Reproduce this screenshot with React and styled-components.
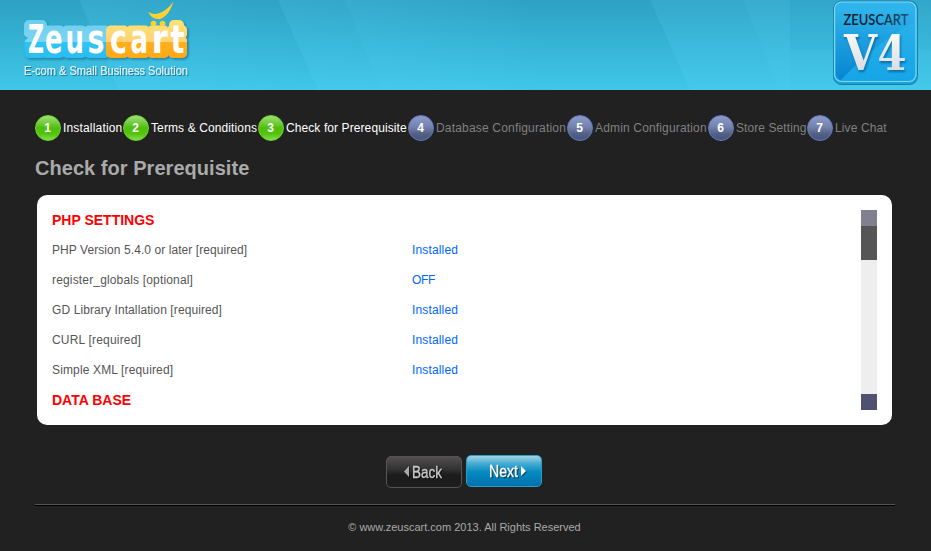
import React from 'react';
import styled, { createGlobalStyle } from 'styled-components';

const GlobalStyle = createGlobalStyle`
  * { box-sizing: border-box; }
  html, body { margin: 0; padding: 0; background: #212121; }
  body { font: 12px "Liberation Sans", Arial, sans-serif; color: #555; overflow: hidden; }
`;

const Page = styled.div`
  width: 931px;
  height: 551px;
  background: #212121;
`;

const Header = styled.header`
  display: grid;
  height: 90px;
  background: linear-gradient(#2da1c3, #3fc7e9);
  > * { grid-area: 1 / 1; }
`;

const Beams = styled.svg`
  display: block;
  width: 931px;
  height: 90px;
`;

const Brand = styled.div`
  display: flex;
  justify-content: space-between;
  padding: 0 10px 0 20px;
  z-index: 1;
  svg { display: block; }
`;

const Tagline = styled.text`
  font: 12.5px "Liberation Sans Narrow", "Liberation Sans", sans-serif;
  fill: #e3f2f7;
  stroke: #e3f2f7;
  stroke-width: .2px;
  filter: drop-shadow(1px 1px 0 #197b9a);
`;

const BadgeNumber = styled.text`
  font: bold 49px "DejaVu Serif", serif;
  fill: url(#silver);
  filter: drop-shadow(1px 2px 1px #086da9);
`;

const ButtonLabel = styled.text`
  font: 16px "Liberation Sans Narrow", "Liberation Sans", sans-serif;
  stroke-width: .35px;
  filter: drop-shadow(1px 1px 0 rgba(0, 0, 0, .6));
`;

const Content = styled.main`
  width: 860px;
  margin-left: 35px;
  padding-top: 25px;
`;

const Steps = styled.ol`
  display: flex;
  height: 26px;
  margin: 0;
  padding: 0;
  list-style: none;
`;

const Step = styled.li`
  display: flex;
  align-items: center;
  gap: 2px;
  width: ${p => p.$width}px;
  flex: none;
  white-space: nowrap;
  letter-spacing: ${p => p.$tracking}px;
  color: ${p => (p.$done ? '#fff' : '#808080')};
`;

const Bullet = styled.span`
  width: 26px;
  height: 26px;
  flex: none;
  border-radius: 50%;
  border: 1px solid ${p => (p.$done ? '#6fd52b' : '#607cc4')};
  background: ${p => (p.$done
    ? 'linear-gradient(#a0df78 0%, #72cb3c 30%, #4fbd0c 50%, #55c40e 75%, #86dc4e 100%)'
    : 'linear-gradient(#8e9bca 0%, #7482af 45%, #536085 75%, #48557b 100%)')};
  color: #fff;
  font: bold 12px/24px "Liberation Sans", Arial, sans-serif;
  letter-spacing: 0;
  text-align: center;
  padding-right: 1px;
`;

const Title = styled.h1`
  margin: 15px 0 0;
  font-size: 20px;
  line-height: 24px;
  letter-spacing: .04px;
  color: #aaa;
`;

const Panel = styled.section`
  display: flex;
  width: 855px;
  height: 230px;
  margin: 15px 0 0 2px;
  padding: 15px;
  border-radius: 10px;
  background: #fff;
`;

const Settings = styled.div`
  flex: 1;
  height: 200px;
  overflow: hidden;
`;

const GroupTitle = styled.h2`
  margin: 0;
  height: 25px;
  font-size: 14px;
  line-height: 20px;
  color: #f00;
`;

const SettingRow = styled.div`
  display: grid;
  grid-template-columns: 360px 1fr;
  height: 30px;
  line-height: 30px;
  letter-spacing: ${p => p.$tracking}px;
`;

const Value = styled.span`
  color: #0066ff;
  letter-spacing: ${p => (p.$off ? -0.3 : 0.15)}px;
`;

const Spacer = styled.div`
  height: 5px;
`;

const ScrollTrack = styled.div`
  display: flex;
  flex-direction: column;
  width: 16px;
  height: 200px;
  background: #eee;
`;

const ScrollCap = styled.div`
  height: 16px;
  background: ${p => p.$color};
`;

const ScrollThumb = styled.div`
  height: 34px;
  margin-bottom: auto;
  background: #555;
`;

const Actions = styled.div`
  display: flex;
  gap: 4px;
  margin: 30px 0 0 351px;
  height: 49px;
`;

const ActionButton = styled.button`
  width: 76px;
  height: 32px;
  margin: ${p => (p.$primary ? 0 : '1px')} 0 0;
  padding: 0;
  border: 1px solid ${p => (p.$primary ? '#2b9fc3' : '#555')};
  border-radius: 5px;
  background: ${p => (p.$primary
    ? 'linear-gradient(#a5d4e6 0%, #46acd2 25%, #078bc1 52%, #0070ae 100%)'
    : 'linear-gradient(#514f4f 0%, #333 40%, #1c1c1c 60%, #1d1d1d 100%)')};
  svg { display: block; }
`;

const Footer = styled.footer`
  border-top: 1px solid #555;
  box-shadow: inset 0 1px #000;
  height: 46px;
  padding: 16px 1px 0 0;
  text-align: center;
  font-size: 11px;
  line-height: 13px;
  color: #aaa;
`;

const steps = [
  ['Installation', 88, 0.17], ['Terms & Conditions', 135, 0.11], ['Check for Prerequisite', 150, 0.09],
  ['Database Configuration', 159, 0.18], ['Admin Configuration', 141, 0.16], ['Store Setting', 99, 0.08],
  ['Live Chat', 88, 0.11],
];

const settings = [
  ['PHP Version 5.4.0 or later [required]', 'Installed', 0.07],
  ['register_globals [optional]', 'OFF', 0.16],
  ['GD Library Intallation [required]', 'Installed', 0.1],
  ['CURL [required]', 'Installed', 0.19],
  ['Simple XML [required]', 'Installed', 0.14],
];

const wordmark = [
  { ch: 'Z', x: 8, w: 16, size: 38.5 },
  { ch: 'e', x: 25, w: 17.5, size: 41 },
  { ch: 'u', x: 45.5, w: 18.5, size: 41 },
  { ch: 's', x: 67.5, w: 17, size: 41 },
  { ch: 'c', x: 90, w: 17, size: 41 },
  { ch: 'a', x: 110.5, w: 17.5, size: 41 },
  { ch: 'r', x: 131.5, w: 16.5, size: 41 },
  { ch: 't', x: 150.5, w: 14, size: 38.5 },
];

const Logo = () => (
  <svg width="220" height="90" aria-label="Zeuscart">
    <defs>
      <linearGradient id="blue" gradientUnits="userSpaceOnUse" x1="0" y1="20" x2="0" y2="58">
        <stop offset="0" stopColor="#6ccfee" /><stop offset=".57" stopColor="#7bd4f2" />
        <stop offset=".58" stopColor="#2fc3f6" /><stop offset="1" stopColor="#29bdf2" />
      </linearGradient>
      <linearGradient id="gold" gradientUnits="userSpaceOnUse" x1="0" y1="20" x2="0" y2="58">
        <stop offset="0" stopColor="#ffe372" /><stop offset=".57" stopColor="#ffd276" />
        <stop offset=".58" stopColor="#ffb01d" /><stop offset="1" stopColor="#fda916" />
      </linearGradient>
      <filter id="soft" x="-10%" y="-10%" width="120%" height="130%">
        <feDropShadow dx="1.5" dy="1.5" stdDeviation="1" floodColor="#086080" floodOpacity=".65" />
      </filter>
    </defs>
    <g filter="url(#soft)">
      <g fill="url(#blue)">
        <rect x="4" y="20" width="23" height="18" rx="5" />
        <rect x="8" y="22" width="17" height="30" />
        <rect x="4.5" y="38" width="22" height="20" rx="5" />
        <rect x="21" y="25.5" width="24" height="32.5" rx="5" />
        <rect x="42" y="25.5" width="25" height="32.5" rx="5" />
        <rect x="64" y="25.5" width="26" height="32.5" rx="5" />
        <rect x="20" y="29" width="75" height="26" />
      </g>
      <g fill="url(#gold)">
        <rect x="86" y="25.5" width="23" height="32.5" rx="5" />
        <rect x="106" y="25.5" width="24" height="32.5" rx="5" />
        <rect x="127" y="25.5" width="22" height="32.5" rx="5" />
        <rect x="149" y="20" width="15" height="24" rx="5" />
        <rect x="147" y="25" width="20" height="14" rx="5" />
        <rect x="148" y="36" width="19" height="22" rx="5" />
        <rect x="90" y="29" width="70" height="26" />
      </g>
    </g>
    <g fontFamily="'DejaVu Sans', sans-serif" fontWeight="bold" fill="#fff">
      {wordmark.map(({ ch, x, w, size }) => (
        <text key={ch} x={x} y="52.5" fontSize={size} textLength={w} lengthAdjust="spacingAndGlyphs">{ch}</text>
      ))}
    </g>
    <g fill="#ffd12e">
      <path d="M128.5 12C136 17 146 12 153.5 1.5C151 10 146 17.5 140 19C134 19.5 130 16.5 128.5 12Z" />
      <circle cx="133.5" cy="23.5" r="2.8" /><circle cx="142.5" cy="23.5" r="2.8" />
    </g>
    <Tagline x="4" y="75" textLength="164" lengthAdjust="spacingAndGlyphs">E-com &amp; Small Business Solution</Tagline>
  </svg>
);

const Badge = () => (
  <svg width="91" height="90" aria-label="Zeuscart V4">
    <defs>
      <linearGradient id="tile" x1="0" y1="0" x2="0" y2="1">
        <stop stopColor="#2fb4eb" /><stop offset="1" stopColor="#15a5e7" />
      </linearGradient>
      <linearGradient id="shade" x1="0" y1="0" x2="0" y2="1">
        <stop stopColor="#2fb4eb" /><stop offset="1" stopColor="#0785d1" />
      </linearGradient>
      <linearGradient id="silver" x1="0" y1="0" x2="0" y2="1">
        <stop stopColor="#fff" /><stop offset=".6" stopColor="#e4e6e8" /><stop offset="1" stopColor="#d0d4d8" />
      </linearGradient>
      <linearGradient id="ink" x1="0" y1="0" x2="1" y2="0">
        <stop stopColor="#10202c" /><stop offset=".5" stopColor="#123" /><stop offset="1" stopColor="#1b5273" />
      </linearGradient>
    </defs>
    <rect x="3.5" y="1" width="84" height="83.5" rx="8" fill="#1ba1d8" stroke="#147faa" />
    <rect x="4.5" y="2" width="81.5" height="79.5" rx="7" fill="url(#tile)" stroke="#82d8f8" strokeWidth="1.2" />
    <path d="M6 8H84V22C62 34 38 52 11 80Q6 79 6 74Z" fill="url(#shade)" />
    <text x="13.5" y="24.8" fontFamily="Lato, sans-serif" fontWeight="600" fontSize="14.5" fill="url(#ink)" textLength="65" lengthAdjust="spacingAndGlyphs">ZEUSCART</text>
    <BadgeNumber x="14" y="70" textLength="33" lengthAdjust="spacingAndGlyphs">V</BadgeNumber>
    <BadgeNumber x="47.5" y="70" textLength="29" lengthAdjust="spacingAndGlyphs">4</BadgeNumber>
  </svg>
);

const ButtonArt = ({ label, x, width, arrow, color, arrowColor }) => (
  <svg width="74" height="30">
    <ButtonLabel x={x} y="21" fill={color} stroke={color} textLength={width} lengthAdjust="spacingAndGlyphs">{label}</ButtonLabel>
    <path d={arrow} fill="#111" opacity=".5" transform="translate(1 1)" />
    <path d={arrow} fill={arrowColor} />
  </svg>
);

export default function App() {
  return (
    <Page>
      <GlobalStyle />
      <Header>
        <Beams>
          <defs>
            <linearGradient id="beam" x1="0" x2="1">
              <stop stopColor="#62dbff" stopOpacity=".15" /><stop offset="1" stopColor="#62dbff" stopOpacity="0" />
            </linearGradient>
          </defs>
          <path d="M79 0H310L300 90H119Z" fill="url(#beam)" />
          <path d="M278 0H510L540 90H318Z" fill="url(#beam)" />
          <path d="M345 0H520L560 90H382Z" fill="url(#beam)" opacity=".45" />
          <path d="M650 0H931V90H690Z" fill="#62dbff" opacity=".14" />
          <path d="M743 0H790V90H779Z" fill="#62dbff" opacity=".08" />
          <path d="M790 0H931V50H790Z" fill="#1e9cc4" opacity=".1" />
        </Beams>
        <Brand><Logo /><Badge /></Brand>
      </Header>
      <Content>
        <Steps>
          {steps.map(([label, width, tracking], i) => (
            <Step key={label} $done={i < 3} $width={width} $tracking={tracking}>
              <Bullet $done={i < 3}>{i + 1}</Bullet>{label}
            </Step>
          ))}
        </Steps>
        <Title>Check for Prerequisite</Title>
        <Panel>
          <Settings>
            <GroupTitle>PHP SETTINGS</GroupTitle>
            {settings.map(([name, value, tracking]) => (
              <SettingRow key={name} $tracking={tracking}>
                <span>{name}</span><Value $off={value === 'OFF'}>{value}</Value>
              </SettingRow>
            ))}
            <Spacer />
            <GroupTitle>DATA BASE</GroupTitle>
          </Settings>
          <ScrollTrack>
            <ScrollCap $color="#808090" />
            <ScrollThumb />
            <ScrollCap $color="#505070" />
          </ScrollTrack>
        </Panel>
        <Actions>
          <ActionButton>
            <ButtonArt label="Back" x={25} width={30} arrow="M22 9V20L17 14.5Z" color="#c8c8c8" arrowColor="#aaa" />
          </ActionButton>
          <ActionButton $primary>
            <ButtonArt label="Next" x={22} width={29} arrow="M54 10V20L59 15Z" color="#fff" arrowColor="#fff" />
          </ActionButton>
        </Actions>
        <Footer>© www.zeuscart.com 2013. All Rights Reserved</Footer>
      </Content>
    </Page>
  );
}
